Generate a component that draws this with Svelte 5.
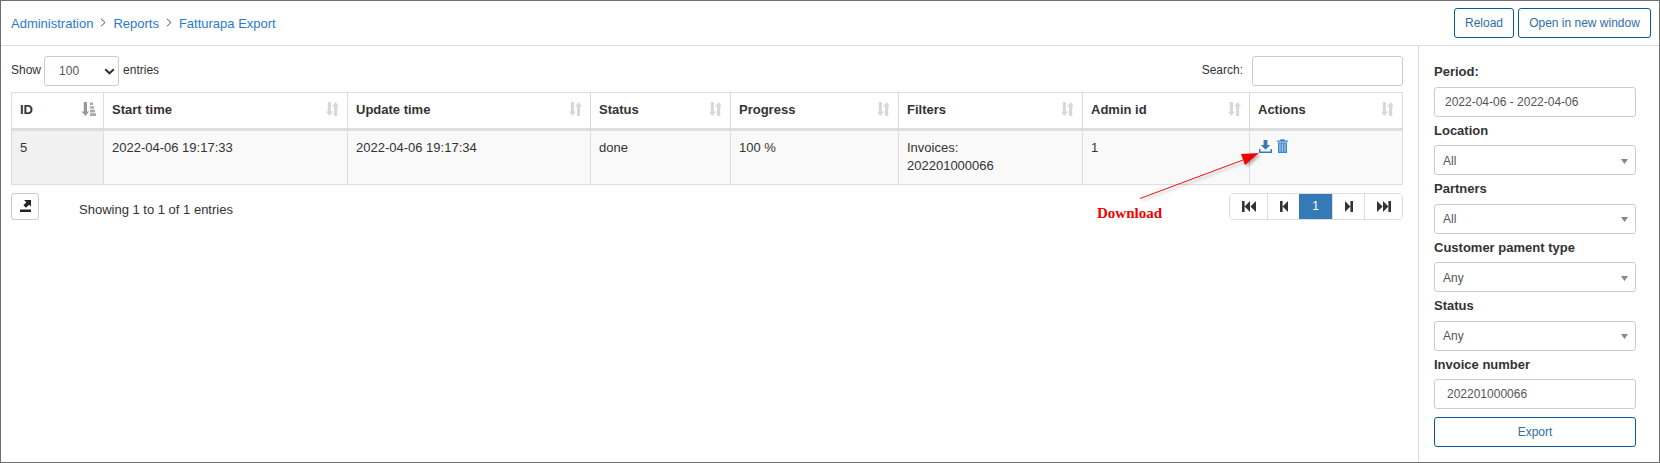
<script lang="ts">
  const crumbs = ["Administration", "Reports", "Fatturapa Export"];
  const columns = [
    { name: "ID", width: 92 },
    { name: "Start time", width: 244 },
    { name: "Update time", width: 243 },
    { name: "Status", width: 140 },
    { name: "Progress", width: 168 },
    { name: "Filters", width: 184 },
    { name: "Admin id", width: 167 },
    { name: "Actions", width: 153 }
  ];
  const filters = [
    { label: "Location", value: "All" },
    { label: "Partners", value: "All" },
    { label: "Customer pament type", value: "Any" },
    { label: "Status", value: "Any" }
  ];
</script>

<div class="page">
  <header class="topbar">
    <nav class="crumbs">
      {#each crumbs as crumb, i}
        {#if i > 0}
          <svg class="sep" width="6" height="9" viewBox="0 0 6 9"><path d="M1 .8 5 4.5 1 8.2" fill="none" stroke="#555" stroke-width="1"/></svg>
        {/if}
        <a href="#top">{crumb}</a>
      {/each}
    </nav>
    <div class="top-actions">
      <button class="outline reload">Reload</button>
      <button class="outline open">Open in new window</button>
    </div>
  </header>

  <div class="body">
    <main class="content">
      <div class="controls">
        <div class="length">
          <span>Show</span>
          <div class="length-select">
            100
            <svg width="11" height="7" viewBox="0 0 11 7"><path d="M1.2 1.2 5.5 5.3 9.8 1.2" fill="none" stroke="#333" stroke-width="2"/></svg>
          </div>
          <span>entries</span>
        </div>
        <div class="search">
          <span>Search:</span>
          <input type="text" />
        </div>
      </div>

      <table>
        <colgroup>
          {#each columns as col}
            <col style="width: {col.width}px" />
          {/each}
        </colgroup>
        <thead>
          <tr>
            {#each columns as col, i}
              <th>
                <span>{col.name}</span>
                {#if i === 0}
                  <svg class="sort first" width="14" height="14" viewBox="0 0 14 14">
                    <path d="M1.8 0h3.2v9.5h2.2L3.4 14-.4 9.5h2.2z" fill="#999"/>
                    <path d="M8 .5h3v2.6H8zM8 4.2h4v2.6H8zM8 7.8h5v2.6H8zM8 11.2h6V14H8z" fill="#aaa"/>
                  </svg>
                {:else}
                  <svg class="sort" width="13" height="14" viewBox="0 0 13 14">
                    <path d="M1.8 0h3.2v9.5h2L3.4 14 0 9.5h1.8z" fill="#d8d8d8"/>
                    <path d="M8 14h3.2V4.5H13L9.6 0 6 4.5h2z" fill="#d8d8d8"/>
                  </svg>
                {/if}
              </th>
            {/each}
          </tr>
        </thead>
        <tbody>
          <tr>
            <td class="sorted">5</td>
            <td>2022-04-06 19:17:33</td>
            <td>2022-04-06 19:17:34</td>
            <td>done</td>
            <td>100 %</td>
            <td>Invoices:<br />202201000066</td>
            <td>1</td>
            <td class="actions">
              <div class="action-icons">
                <svg class="download" width="13" height="13" viewBox="0 0 13 13">
                  <path d="M4.6 0h3.8v5h2.8L6.5 9.8 1.8 5h2.8z" fill="#337ab7"/>
                  <path d="M0 9h1.5v2.5h10V9H13v4H0z" fill="#337ab7"/>
                </svg>
                <svg class="trash" width="11" height="14" viewBox="0 0 11 14">
                  <path d="M3.6.3h3.8l.5 1.2H11v1.2H0V1.5h3.1z" fill="#3f86c9"/>
                  <path d="M1 3.4h9V14H1z" fill="#3f86c9"/>
                  <path d="M2.4 4.6h1.2v8.2H2.4zM4.9 4.6h1.2v8.2H4.9zM7.4 4.6h1.2v8.2H7.4z" fill="#a9cdee"/>
                </svg>
              </div>
            </td>
          </tr>
        </tbody>
      </table>

      <div class="footer">
        <button class="export-icon" aria-label="Export table">
          <svg width="13" height="13" viewBox="0 0 13 13">
            <path d="M5 0h7v6.5L10 4.8 7 7.8 4.4 5.2l3-3z" fill="#222"/>
            <path d="M1 9.5h11V12H1z" fill="#222"/>
          </svg>
        </button>
        <span class="info">Showing 1 to 1 of 1 entries</span>
        <div class="pager">
          <button class="w1" aria-label="First">
            <svg width="14" height="11" viewBox="0 0 14 11"><path d="M0 0h2.6v11H0zM8 0v11L2.6 5.5zM14 0v11L8.4 5.5z" fill="#333"/></svg>
          </button>
          <button class="w2" aria-label="Previous">
            <svg width="8" height="11" viewBox="0 0 8 11"><path d="M0 0h2.6v11H0zM8 0v11L2.6 5.5z" fill="#333"/></svg>
          </button>
          <button class="w3 active">1</button>
          <button class="w4" aria-label="Next">
            <svg width="8" height="11" viewBox="0 0 8 11"><path d="M8 0H5.4v11H8zM0 0v11l5.4-5.5z" fill="#333"/></svg>
          </button>
          <button class="w5" aria-label="Last">
            <svg width="14" height="11" viewBox="0 0 14 11"><path d="M14 0h-2.6v11H14zM6 0v11l5.4-5.5zM0 0v11l5.6-5.5z" fill="#333"/></svg>
          </button>
        </div>
      </div>

      <svg class="arrow" width="126" height="54" viewBox="0 0 126 54">
        <path d="M1 48.5 104 10" stroke="#f01010" stroke-width="1" fill="none"/>
        <path d="M120 3 102 4 106 15z" fill="#f40000"/>
      </svg>
      <span class="note">Download</span>
    </main>

    <aside class="sidebar">
      <div class="field">
        <span class="label">Period:</span>
        <input class="period" type="text" value="2022-04-06 - 2022-04-06" />
      </div>
      {#each filters as f}
        <div class="field">
          <span class="label">{f.label}</span>
          <div class="dropdown">
            {f.value}
            <svg width="7" height="5" viewBox="0 0 7 5"><path d="M0 0h7L3.5 5z" fill="#888"/></svg>
          </div>
        </div>
      {/each}
      <div class="field">
        <span class="label">Invoice number</span>
        <input class="invoice" type="text" value="202201000066" />
      </div>
      <button class="outline submit">Export</button>
    </aside>
  </div>
</div>

<style>
  :global(body) {
    margin: 0;
  }

  .page {
    box-sizing: border-box;
    width: 1660px;
    height: 463px;
    border: 1px solid #6f6f6f;
    display: flex;
    flex-direction: column;
    font-family: "Liberation Sans", Arial, sans-serif;
    font-size: 13px;
    line-height: 18.57px;
    color: #333;
    background: #fff;
  }

  .topbar {
    box-sizing: border-box;
    height: 45px;
    flex: none;
    display: flex;
    justify-content: space-between;
    align-items: center;
    padding: 0 8px 0 10px;
    border-bottom: 1px solid #dcdcdc;
  }

  .crumbs {
    display: flex;
    align-items: center;
    padding-top: 3px;
  }

  .crumbs a {
    color: #2a7ad2;
    text-decoration: none;
  }

  .sep {
    margin: 0 7px;
    position: relative;
    top: -2px;
  }

  .top-actions {
    display: flex;
    gap: 4px;
  }

  .outline {
    box-sizing: border-box;
    height: 30px;
    padding: 0;
    background: #fff;
    border: 1px solid #0b5a96;
    border-radius: 3px;
    color: #2f6ea8;
    font: inherit;
    font-size: 12px;
  }

  .reload {
    width: 60px;
  }

  .open {
    width: 133px;
  }

  .body {
    flex: 1;
    display: flex;
    min-height: 0;
  }

  .content {
    position: relative;
    flex: 1;
    box-sizing: border-box;
    padding: 10px 15px 0 10px;
  }

  .controls {
    display: flex;
    justify-content: space-between;
    align-items: center;
    height: 29px;
    margin-bottom: 7px;
    font-size: 12px;
  }

  .length,
  .search {
    display: flex;
    align-items: center;
  }

  .length-select {
    box-sizing: border-box;
    width: 75px;
    height: 30px;
    margin: 0 4px 0 3px;
    padding: 1px 0 0 14px;
    display: flex;
    align-items: center;
    justify-content: space-between;
    border: 1px solid #ccc;
    border-radius: 3px;
    color: #555;
  }

  .length-select svg {
    margin-right: 3px;
  }

  .search input {
    box-sizing: border-box;
    width: 151px;
    height: 30px;
    margin-left: 9px;
    border: 1px solid #ccc;
    border-radius: 3px;
    outline: none;
  }

  table {
    width: 1391px;
    table-layout: fixed;
    border-collapse: collapse;
  }

  th,
  td {
    box-sizing: border-box;
    border: 1px solid #ddd;
    padding: 8px;
    text-align: left;
    vertical-align: top;
  }

  th {
    position: relative;
    height: 37px;
    padding: 7px 8px;
    border-bottom: 3px solid #ddd;
    font-weight: bold;
    vertical-align: middle;
  }

  .sort {
    position: absolute;
    right: 8px;
    top: 9px;
  }

  .sort.first {
    right: 7px;
  }

  tbody td {
    height: 55px;
    line-height: 18px;
    background: #f9f9f9;
  }

  tbody td.sorted {
    background: #f1f1f1;
  }

  .actions {
    padding: 8px 0 0 9px;
  }

  .action-icons {
    display: flex;
    align-items: flex-start;
    gap: 5px;
  }

  .download {
    margin-top: 1px;
  }

  .footer {
    display: flex;
    align-items: center;
    height: 27px;
    margin-top: 8px;
  }

  .export-icon {
    box-sizing: border-box;
    width: 28px;
    height: 27px;
    padding: 0;
    display: flex;
    align-items: center;
    justify-content: center;
    background: #fff;
    border: 1px solid #ccc;
    border-radius: 3px;
  }

  .info {
    margin-left: 40px;
    padding-top: 8px;
  }

  .pager {
    margin-left: auto;
    display: flex;
    height: 27px;
    box-sizing: border-box;
    border: 1px solid #ddd;
    border-radius: 4px;
    overflow: hidden;
  }

  .pager button {
    box-sizing: border-box;
    height: 100%;
    padding: 0;
    display: flex;
    align-items: center;
    justify-content: center;
    background: #fff;
    border: 0;
    border-left: 1px solid #ddd;
    font: inherit;
    font-size: 12px;
  }

  .pager button:first-child {
    border-left: 0;
  }

  .pager .active {
    background: #337ab7;
    color: #fff;
    border-left: 0;
  }

  .w1 { width: 37px; }
  .w2 { width: 32px; }
  .w3 { width: 33px; }
  .w4 { width: 32px; }
  .w5 { width: 38px; }

  .arrow {
    position: absolute;
    left: 1138px;
    top: 104px;
    filter: drop-shadow(2px 2px 1.5px rgba(0, 0, 0, 0.3));
  }

  .note {
    position: absolute;
    left: 1096px;
    top: 158px;
    font-family: "Liberation Serif", serif;
    font-weight: bold;
    font-size: 15px;
    color: #f00000;
  }

  .sidebar {
    box-sizing: border-box;
    width: 242px;
    flex: none;
    padding: 12px 14px 0 15px;
    border-left: 1px solid #dcdcdc;
  }

  .field {
    height: 58.5px;
    display: flex;
    flex-direction: column;
  }

  .label {
    height: 28.5px;
    line-height: 28px;
    font-weight: bold;
    flex: none;
  }

  .field input,
  .dropdown {
    box-sizing: border-box;
    width: 202px;
    height: 30px;
    flex: none;
    border: 1px solid #ccc;
    border-radius: 3px;
    color: #555;
    font: inherit;
    font-size: 12px;
    background: #fff;
    outline: none;
  }

  .period {
    padding: 0 0 0 10px;
  }

  .invoice {
    padding: 0 0 0 12px;
  }

  .dropdown {
    display: flex;
    align-items: center;
    justify-content: space-between;
    padding: 2px 7px 0 8px;
  }

  .submit {
    width: 202px;
    margin-top: 8px;
  }
</style>
